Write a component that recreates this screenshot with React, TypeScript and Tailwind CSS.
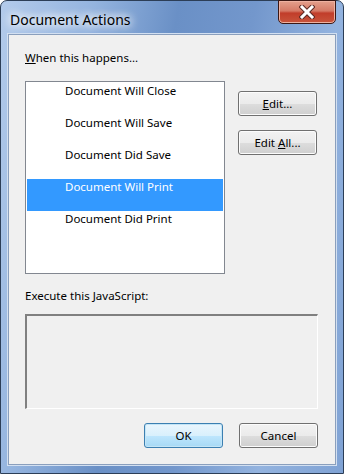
import React from 'react'

const items = [
  'Document Will Close',
  'Document Will Save',
  'Document Did Save',
  'Document Will Print',
  'Document Did Print',
]

function WinButton({ children, primary }: { children: React.ReactNode; primary?: boolean }) {
  return (
    <button
      className={
        primary
          ? 'w-[79px] h-[25px] rounded-[3px] border border-[#3c7fb1] bg-[linear-gradient(#eaf6fd_0%,#d9f0fc_50%,#bee6fd_51%,#a7d9f5_100%)] shadow-[inset_0_0_0_1px_#c4e5f6] text-[11.5px] text-black'
          : 'w-[79px] h-[25px] rounded-[3px] border border-[#707070] bg-[linear-gradient(#f2f2f2_0%,#ebebeb_50%,#dddddd_51%,#cfcfcf_100%)] shadow-[inset_0_0_0_1px_#fcfcfc] text-[11.5px] text-black'
      }
    >
      {children}
    </button>
  )
}

export default function App() {
  return (
    <div
      className="w-[344px] h-[474px] flex flex-col px-[7px] pb-[8px] bg-[linear-gradient(100deg,#b3cbeb_0%,#94b4df_22%,#6a90c6_42%,#7397cc_60%,#93b3df_80%,#7fa2d4_100%)] rounded-t-[7px] border border-[#2c3e57]"
      style={{ fontFamily: '"Noto Sans", "Open Sans", sans-serif' }}
    >
      {/* title bar */}
      <div className="h-[33px] flex items-start justify-between">
        <div className="mt-[8px] ml-[2px] text-[14px] text-black [text-shadow:0_0_8px_#fff,0_0_10px_#fff,0_0_12px_#fff]">
          Document Actions
        </div>
        <div className="w-[58px] h-[24px] -mt-px rounded-b-[5px] border border-[#3b1714] bg-[linear-gradient(#e4a08d_0%,#d57a66_45%,#c13d2a_55%,#c8553c_100%)] shadow-[inset_0_0_0_1px_#eeb1a0] flex items-center justify-center">
          <svg width="16" height="14" viewBox="0 0 16 14">
            <path d="M3 2 L13 12 M13 2 L3 12" stroke="#5a2a24" strokeWidth="5" strokeLinecap="square" />
            <path d="M3 2 L13 12 M13 2 L3 12" stroke="#ffffff" strokeWidth="3" strokeLinecap="square" />
          </svg>
        </div>
      </div>

      {/* client area */}
      <div className="flex-1 bg-[#f0f0f0] border border-[#8a9fbd] shadow-[0_0_0_1px_#d3e0f1] flex flex-col pl-[16px] pr-[17px] pt-[15px] text-[11.5px] text-black">
        <div className="leading-[16px]">
          <span className="underline">W</span>hen this happens...
        </div>

        <div className="flex mt-[15px]">
          <div className="w-[200px] h-[193px] bg-white border border-[#828790] p-px">
            {items.map((it) => (
              <div
                key={it}
                className={
                  it === 'Document Will Print'
                    ? 'h-[32px] pl-[38px] leading-[16px] bg-[#3399ff] text-white'
                    : 'h-[32px] pl-[38px] leading-[16px]'
                }
              >
                {it}
              </div>
            ))}
          </div>
          <div className="flex flex-col gap-[14px] ml-[13px] mt-[10px]">
            <WinButton>
              <span className="underline">E</span>dit...
            </WinButton>
            <WinButton>
              Edit <span className="underline">A</span>ll...
            </WinButton>
          </div>
        </div>

        <div className="leading-[16px] mt-[14px]">Execute this JavaScript:</div>

        <div className="mt-[10px] w-[293px] h-[95px] bg-[#f0f0f0] border-t-2 border-l-2 border-t-[#808080] border-l-[#808080] border-b border-r border-b-white border-r-white" />

        <div className="flex justify-end gap-[16px] mt-[14px]">
          <WinButton primary>OK</WinButton>
          <WinButton>Cancel</WinButton>
        </div>
      </div>
    </div>
  )
}
